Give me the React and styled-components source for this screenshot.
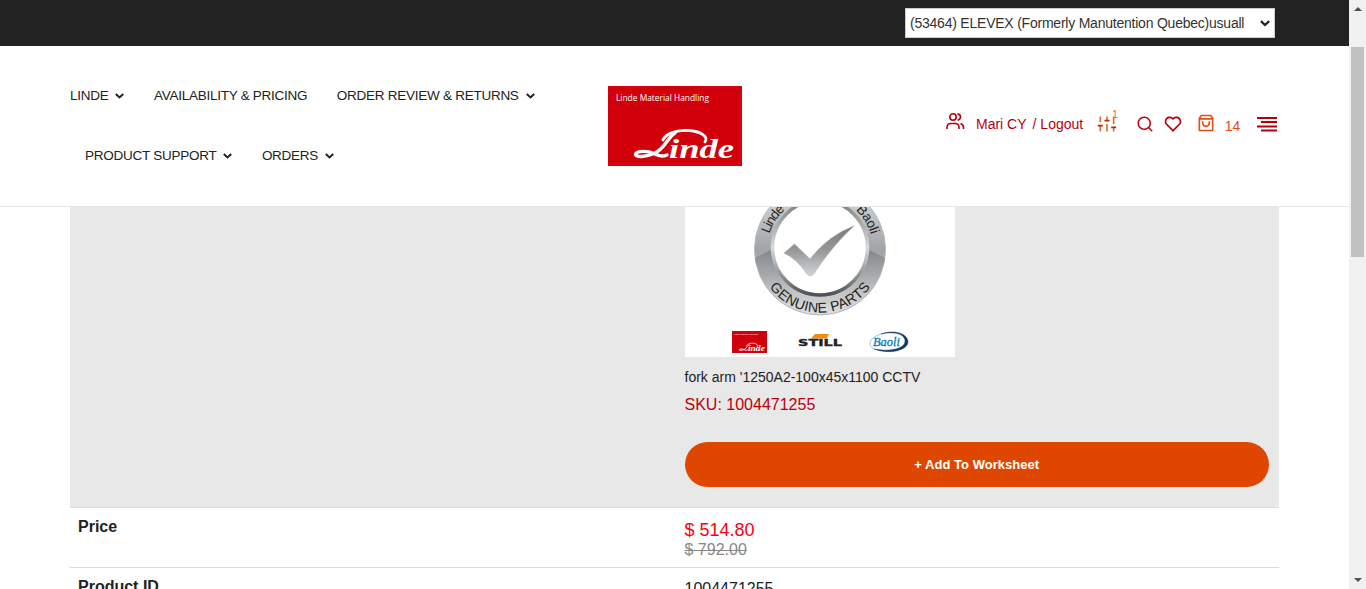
import React from "react";
import styled, { createGlobalStyle } from "styled-components";
import { RiSearchLine, RiHeartLine, RiShoppingBag3Line } from "react-icons/ri";

const Global = createGlobalStyle`
  * { box-sizing: border-box; }
  html, body { margin: 0; height: 100%; overflow: hidden; background: #fff; }
  body { font-family: "Liberation Sans", Arial, sans-serif; color: #222; font-size: 14px; }
`;

const Screen = styled.div`
  display: flex;
  width: 1366px;
  height: 589px;
  overflow: hidden;
`;
const Page = styled.div`
  width: 1349px;
  height: 589px;
  overflow: hidden;
`;
const TopBar = styled.div`
  height: 46px;
  background: #222;
  padding: 8px 74px 0 0;
  display: flex;
  justify-content: flex-end;
`;
const Dealer = styled.div`
  width: 370px;
  height: 30px;
  border: 1px solid #ccc;
  background: #fff;
  color: #333;
  display: flex;
  align-items: center;
  justify-content: space-between;
  padding: 0 4px;
  white-space: nowrap;
  letter-spacing: -0.225px;
`;
const Header = styled.header`
  height: 161px;
  border-bottom: 1px solid #e7e7e7;
  display: flex;
  padding-left: 70px;
`;
const Nav = styled.nav`
  width: 538px;
  padding-top: 19px;
`;
const NavRow = styled.div`
  display: flex;
  height: 60px;
  padding-left: ${(p) => p.$indent || 0}px;
  gap: 29.5px;
`;
const NavItem = styled.span`
  display: flex;
  align-items: center;
  gap: 7px;
  height: 60px;
  line-height: 61px;
  font-size: 13.5px;
  letter-spacing: -0.26px;
  white-space: nowrap;
  svg { margin-top: 2px; }
`;
const LogoBox = styled.div`
  width: 134px;
  padding-top: 40px;
  svg { display: block; }
`;
const Tools = styled.div`
  flex: 1;
  display: flex;
  align-items: flex-start;
  padding: 66px 0 0 204px;
  color: #b8000b;
  svg { display: block; flex: none; }
`;
const Tool = styled.span`
  height: 24px;
  line-height: 24px;
  white-space: nowrap;
  margin-left: ${(p) => p.$left || 0}px;
  margin-top: ${(p) => p.$top || 0}px;
  color: ${(p) => p.$color || "inherit"};
  font-size: ${(p) => p.$size || 14}px;
`;
const Table = styled.main`
  width: 1209px;
  margin-left: 70px;
`;
const Row = styled.section`
  display: flex;
  height: ${(p) => p.$h}px;
  border-top: ${(p) => (p.$first ? "0" : "1px solid #dcdcdc")};
  background: ${(p) => (p.$first ? "#e8e8e8" : "#fff")};
`;
const Label = styled.div`
  width: 604.5px;
  padding: 9px 8px;
  font-size: 16px;
  line-height: 20px;
  font-weight: bold;
`;
const Value = styled.div`
  width: 604.5px;
  padding: ${(p) => p.$top || 0}px 10px 0;
  font-size: 16px;
  line-height: 20px;
  svg { display: block; }
`;
const Title = styled.div`
  font-size: 14px;
  line-height: 20px;
  margin-top: 10px;
`;
const Sku = styled.div`
  font-size: 16px;
  line-height: 20px;
  margin-top: 8px;
  color: #b8000b;
`;
const AddButton = styled.button`
  display: block;
  width: 100%;
  height: 45px;
  margin-top: 27px;
  border: 0;
  border-radius: 23px;
  background: #df4700;
  color: #fff;
  font: bold 13px "Liberation Sans", Arial, sans-serif;
  letter-spacing: 0.03px;
`;
const Price = styled.div`
  color: #fa0010;
  font-size: 18px;
  line-height: 20px;
`;
const OldPrice = styled.div`
  color: #888;
  font-size: 16px;
  line-height: 20px;
  text-decoration: line-through;
`;
const Track = styled.aside`
  width: 17px;
  height: 589px;
  background: #f1f1f1;
  display: flex;
  flex-direction: column;
  align-items: center;
  padding-top: 7px;
`;
const Thumb = styled.div`
  width: 13px;
  height: 210px;
  background: #c1c1c1;
  margin: 36px 0 321px;
`;

const Chevron = ({ w = 9, h = 6 }) => (
  <svg width={w} height={h} viewBox="0 0 9 6" fill="none" stroke="#222" strokeWidth="2">
    <path d="M.8.9 4.5 4.4 8.2.9" />
  </svg>
);

const Arrow = ({ down }) => (
  <svg width="8" height="4" viewBox="0 0 8 4">
    <path d={down ? "M0 0H8L4 4Z" : "M0 4H8L4 0Z"} fill="#505050" />
  </svg>
);

const LindeMark = ({ w, h }) => (
  <svg width={w} height={h} viewBox="0 0 134 80" preserveAspectRatio="none">
    <rect width="134" height="80" fill="#d1000a" />
    <text x="8" y="15" fontFamily="Open Sans, sans-serif" fontSize="9" fill="#fff" textLength="93" lengthAdjust="spacingAndGlyphs">
      Linde Material Handling
    </text>
    <g fill="none" stroke="#fff" strokeLinecap="round">
      <path d="M55 54C58 47 70 44 80 44.500C93 45 101 51 97 56" strokeWidth="2.800" />
      <path d="M67 47C59 52 57 63 46 67.500C38 71 28 71.500 27.500 68.500C28 64 41 65 46 67.500C51 70 54 71 59 69" strokeWidth="3.400" />
    </g>
    <text x="61" y="71.500" fontFamily="Liberation Serif, serif" fontSize="27" fontWeight="bold" fontStyle="italic" fill="#fff" stroke="#d1000a" strokeWidth="1.500" paintOrder="stroke" textLength="65" lengthAdjust="spacingAndGlyphs">
      inde
    </text>
  </svg>
);

const Users = () => (
  <svg width="19" height="17" viewBox="0 0 19 17" fill="none" stroke="#b8000b" strokeWidth="1.600">
    <circle cx="7" cy="4" r="3.200" />
    <path d="M1 16V14.500Q1 10.500 5 10.500H9Q13 10.500 13 14.500V16M11.500.9Q14.500 1.500 14.500 4T11.500 7.200M14.500 10.600Q17.500 11.500 17.500 14.500V16" />
  </svg>
);

const Sliders = () => (
  <svg width="20" height="20" viewBox="0 0 24 24" fill="none" strokeWidth="2">
    <path d="M4 21V14M4 10V3M12 21V12M12 8V3M20 21V16M20 12V3" stroke="#d8742a" />
    <path d="M1 14H7M9 8H15M17 16H23" stroke="#bd2508" />
  </svg>
);

const MenuLines = () => (
  <svg width="20" height="16" viewBox="0 0 20 16" fill="#b8000b">
    <path d="M0 1H20V3H0ZM4 5H20V7H4ZM0 9.500H20V11.500H0ZM4 13.500H20V15.500H4Z" />
  </svg>
);

const PartsBadge = () => (
  <svg width="270" height="150" viewBox="685 207 270 150">
    <defs>
      <linearGradient id="metal" x1="0" y1="0" x2="0" y2="1">
        <stop offset="0" stopColor="#e2e3e4" />
        <stop offset=".2" stopColor="#c6c8ca" />
        <stop offset=".5" stopColor="#a2a5a8" />
        <stop offset=".68" stopColor="#a9acae" />
        <stop offset="1" stopColor="#dedfe0" />
      </linearGradient>
      <linearGradient id="rim" x1="0" y1="0" x2="0" y2="1">
        <stop offset="0" stopColor="#77797b" />
        <stop offset=".5" stopColor="#d9dadb" />
        <stop offset=".8" stopColor="#909294" />
        <stop offset="1" stopColor="#4e5052" />
      </linearGradient>
      <linearGradient id="tick" x1="0" y1="0" x2="0" y2="1">
        <stop offset="0" stopColor="#77797b" />
        <stop offset=".5" stopColor="#96989a" />
        <stop offset="1" stopColor="#d2d4d5" />
      </linearGradient>
      <linearGradient id="shade" x1="0" y1="0" x2="0" y2="1">
        <stop offset="0" stopColor="#7f8487" />
        <stop offset="1" stopColor="#a9acae" stopOpacity="0" />
      </linearGradient>
      <path id="lower" d="M757 249.500A63 63 0 0 0 883 249.500" />
      <path id="upper" d="M767 249.500A53 53 0 0 1 873 249.500" />
    </defs>
    <rect x="685" y="207" width="270" height="150" fill="#fff" />
    <circle cx="820" cy="249.500" r="65.500" fill="url(#metal)" stroke="#b4b6b8" />
    <path d="M755 258L772 249.500Q773 270 783 282L768 287Q757 273 755 258ZM885 258L868 249.500Q867 270 857 282L872 287Q883 273 885 258Z" fill="url(#shade)" />
    <circle cx="820" cy="247.500" r="47.500" fill="#fff" stroke="url(#rim)" strokeWidth="3.500" />
    <path d="M784 253L794.500 244 810 259Q829 235 854 226Q836 242 817 269Q812 279 807 274Q797 259 784 253Z" fill="url(#tick)" stroke="#aaadaf" strokeWidth=".6" />
    <g fontFamily="Liberation Sans, sans-serif" fill="#222">
      <text fontSize="14">
        <textPath href="#lower" startOffset="50%" textAnchor="middle" textLength="117">GENUINE PARTS</textPath>
      </text>
      <text fontSize="13.500">
        <textPath href="#upper" startOffset="16" textLength="29">Linde</textPath>
      </text>
      <text fontSize="13.500">
        <textPath href="#upper" startOffset="122" textLength="29">Baoli</textPath>
      </text>
    </g>
    <svg x="732" y="331" width="35" height="22" viewBox="0 0 35 22">
      <LindeMark w="35" h="22" />
    </svg>
    <path d="M815 334H829L826.500 338.500H811Z" fill="#f58a0b" />
    <text x="798" y="346" fontFamily="DejaVu Sans, sans-serif" fontSize="8" fontWeight="bold" fill="#222" stroke="#222" strokeWidth=".3" textLength="44" lengthAdjust="spacingAndGlyphs">
      STILL
    </text>
    <path d="M881 334C895 329 908 334 908 342C908 350 890 355 874 349C889 352 904 349 905 342C906 334 894 331 881 334Z" fill="#17375e" stroke="#17375e" strokeWidth=".5" />
    <path d="M881 334C869 338 867 345 874 349" fill="none" stroke="#77b7dc" strokeWidth=".8" />
    <text x="873" y="346" fontFamily="Liberation Serif, serif" fontSize="13" fontStyle="italic" fill="#0879bb" stroke="#0879bb" strokeWidth=".3" textLength="27" lengthAdjust="spacingAndGlyphs">
      Baoli
    </text>
  </svg>
);

export default function App() {
  return (
    <Screen>
      <Global />
      <Page>
        <TopBar>
          <Dealer>
            (53464) ELEVEX (Formerly Manutention Quebec)usuall
            <Chevron w={10} h={7} />
          </Dealer>
        </TopBar>
        <Header>
          <Nav>
            <NavRow>
              <NavItem>LINDE <Chevron /></NavItem>
              <NavItem>AVAILABILITY &amp; PRICING</NavItem>
              <NavItem>ORDER REVIEW &amp; RETURNS <Chevron /></NavItem>
            </NavRow>
            <NavRow $indent={15}>
              <NavItem>PRODUCT SUPPORT <Chevron /></NavItem>
              <NavItem>ORDERS <Chevron /></NavItem>
            </NavRow>
          </Nav>
          <LogoBox><LindeMark w="134" h="80" /></LogoBox>
          <Tools>
            <Tool $top={1}><Users /></Tool>
            <Tool $left={11}>Mari CY</Tool>
            <Tool $left={6}>/ Logout</Tool>
            <Tool $left={14} $top={2}><Sliders /></Tool>
            <Tool $left={-5} $top={-9} $size={10} $color="#df6a2a">1</Tool>
            <Tool $left={18} $top={3}><RiSearchLine size={18} /></Tool>
            <Tool $left={9} $top={2}><RiHeartLine size={20} /></Tool>
            <Tool $left={13} $top={1} $color="#df4f16"><RiShoppingBag3Line size={20} /></Tool>
            <Tool $left={9} $top={2} $color="#df4f16">14</Tool>
            <Tool $left={17} $top={4}><MenuLines /></Tool>
          </Tools>
        </Header>
        <Table>
          <Row $first $h={300}>
            <Label />
            <Value>
              <PartsBadge />
              <Title>fork arm '1250A2-100x45x1100 CCTV</Title>
              <Sku>SKU: 1004471255</Sku>
              <AddButton>+ Add To Worksheet</AddButton>
            </Value>
          </Row>
          <Row $h={60}>
            <Label>Price</Label>
            <Value $top={12}>
              <Price>$ 514.80</Price>
              <OldPrice>$ 792.00</OldPrice>
            </Value>
          </Row>
          <Row $h={60}>
            <Label>Product ID</Label>
            <Value $top={11}>1004471255</Value>
          </Row>
        </Table>
      </Page>
      <Track>
        <Arrow />
        <Thumb />
        <Arrow down />
      </Track>
    </Screen>
  );
}
